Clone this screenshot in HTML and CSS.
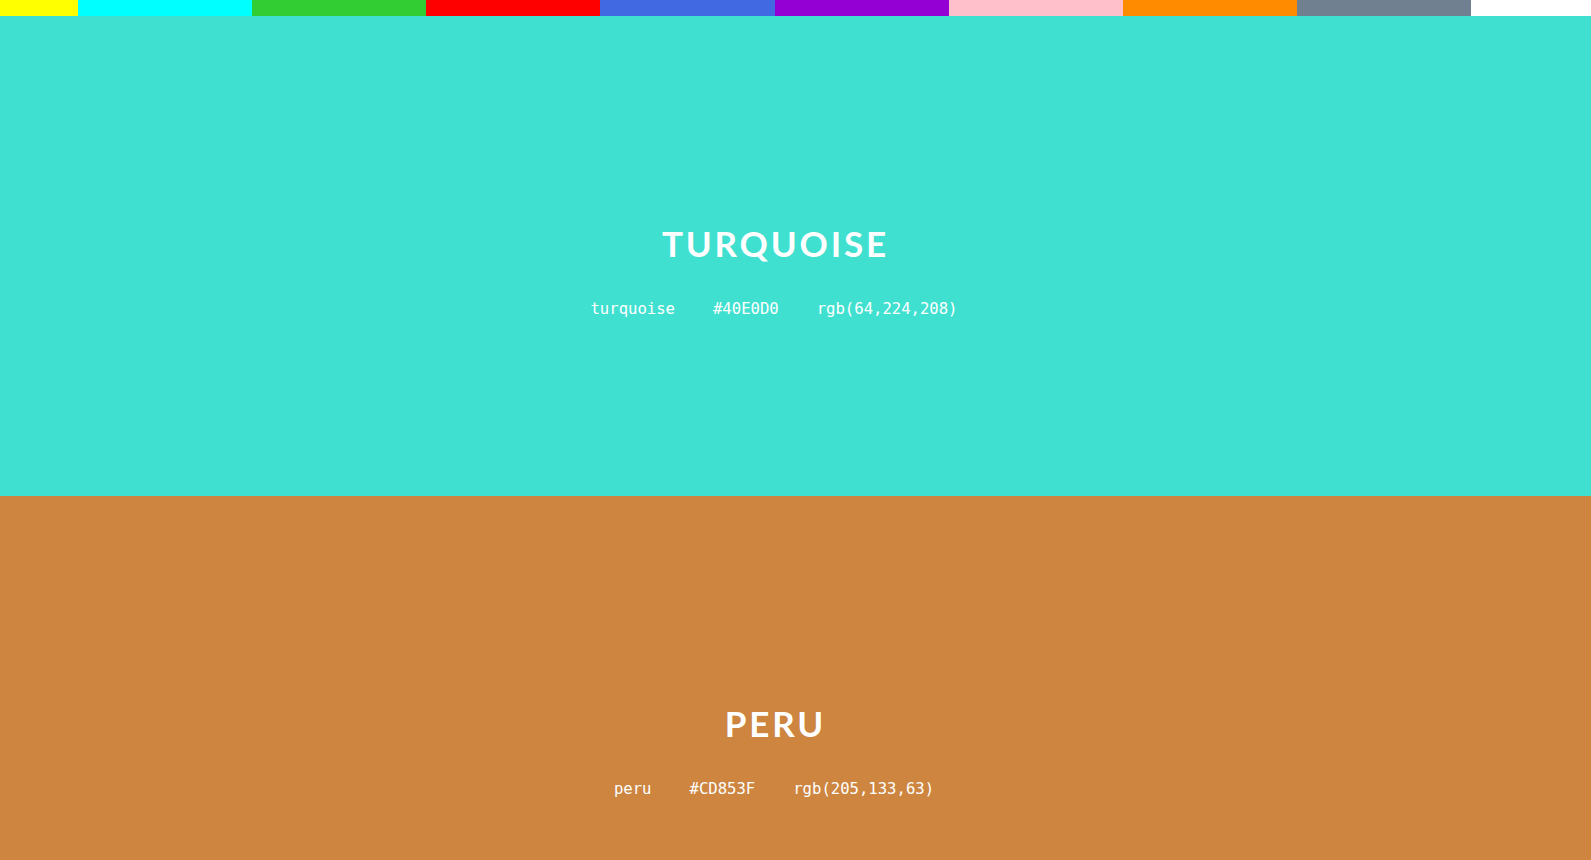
FILE: index.html
```html
<!DOCTYPE html>
<html lang="en">
<head>
<meta charset="utf-8">
<title>Colors</title>
<link rel="stylesheet" href="styles.css">
</head>
<body>
<nav class="swatches">
  <div class="swatch-track">
    <a class="swatch sw-yellow"></a>
    <a class="swatch sw-cyan"></a>
    <a class="swatch sw-limegreen"></a>
    <a class="swatch sw-red"></a>
    <a class="swatch sw-royalblue"></a>
    <a class="swatch sw-darkviolet"></a>
    <a class="swatch sw-pink"></a>
    <a class="swatch sw-darkorange"></a>
    <a class="swatch sw-slategray"></a>
    <a class="swatch sw-white"></a>
  </div>
</nav>
<main>
  <section class="color turquoise">
    <h2 class="color-title">TURQUOISE</h2>
    <div class="color-meta">
      <span>turquoise</span>
      <span>#40E0D0</span>
      <span>rgb(64,224,208)</span>
    </div>
  </section>
  <section class="color peru">
    <h2 class="color-title">PERU</h2>
    <div class="color-meta">
      <span>peru</span>
      <span>#CD853F</span>
      <span>rgb(205,133,63)</span>
    </div>
  </section>
</main>
</body>
</html>
```
FILE: styles.css
```css
html, body {
  margin: 0;
  padding: 0;
  overflow: hidden;
}
body {
  font-family: Lato, "Open Sans", sans-serif;
}
.swatches {
  height: 16px;
  overflow: hidden;
}
.swatch-track {
  display: flex;
  margin-left: -96.1px;
  height: 16px;
}
.swatch {
  flex: 0 0 174.125px;
  height: 16px;
  display: block;
}
.sw-yellow { background: #ffff00; }
.sw-cyan { background: #00ffff; }
.sw-limegreen { background: #32cd32; }
.sw-red { background: #ff0000; }
.sw-royalblue { background: #4169e1; }
.sw-darkviolet { background: #9400d3; }
.sw-pink { background: #ffc0cb; }
.sw-darkorange { background: #ff8c00; }
.sw-slategray { background: #708090; }
.sw-white { background: #ffffff; }

.color {
  height: 480px;
  box-sizing: border-box;
  padding-top: 206px;
  padding-right: 43px;
  display: flex;
  flex-direction: column;
  align-items: center;
  color: #ffffff;
}
.turquoise { background: #40e0d0; }
.peru { background: #cd853f; }

.color-title {
  margin: 0 0 36px;
  font-family: Lato, sans-serif;
  font-weight: 700;
  font-size: 35px;
  line-height: 42px;
  letter-spacing: 2.85px;
  padding-left: 2.85px;
}
.color-meta {
  display: flex;
  gap: 38px;
  font-family: "DejaVu Sans Mono", monospace;
  font-size: 15.6px;
  line-height: 18px;
}
```
